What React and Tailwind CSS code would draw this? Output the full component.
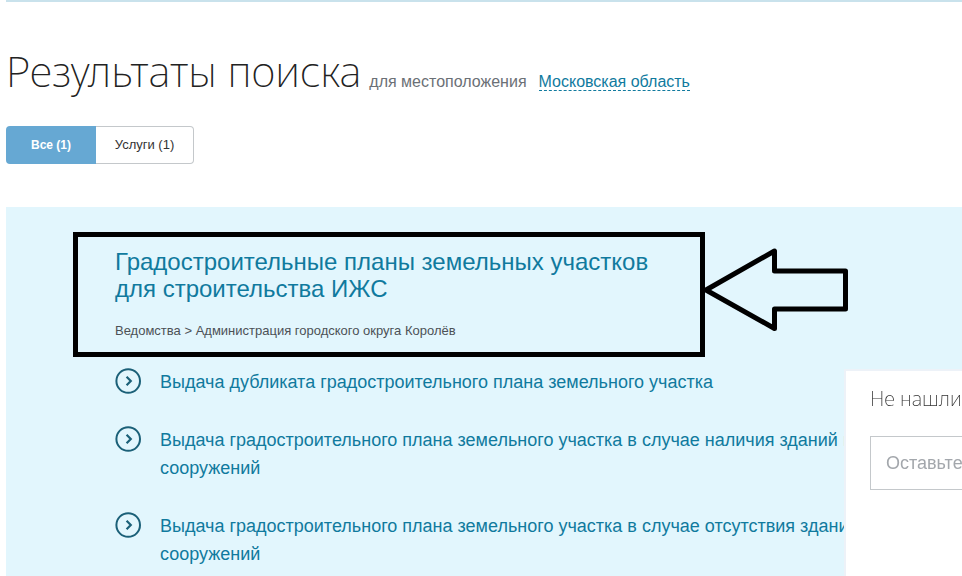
import React from 'react';

const tabs = [
    { id: 'all', label: 'Все (1)', active: true },
    { id: 'services', label: 'Услуги (1)', active: false },
];

const services = [
    'Выдача дубликата градостроительного плана земельного участка',
    'Выдача градостроительного плана земельного участка в случае наличия зданий и сооружений',
    'Выдача градостроительного плана земельного участка в случае отсутствия зданий и сооружений',
];

const CircleChevron = () => (
    <svg className="w-7 h-7 shrink-0" viewBox="0 0 28 28" fill="none" stroke="#1b6078" strokeWidth="2" aria-hidden="true">
        <circle cx="14.2" cy="13" r="11.8" />
        <path d="M12.6 8.7L16.8 13L12.6 17.3" strokeWidth="2.2" />
    </svg>
);

const Tabs = () => (
    <div className="flex mt-7">
        {tabs.map(tab => (
            <button
                key={tab.id}
                type="button"
                className={
                    tab.active
                        ? 'w-[90px] h-[38px] text-xs font-bold text-white bg-[#66a8d3] rounded-l'
                        : 'w-[98px] h-[38px] text-[13px] text-[#333333] bg-white border border-l-0 border-[#c4c8cb] rounded-r-sm'
                }
            >
                {tab.label}
            </button>
        ))}
    </div>
);

const ResultCard = () => (
    <div className="relative w-[632px] border-5 border-black pl-[37px] pr-10 pt-[11px] pb-[14px]">
        <h2 className="text-2xl leading-[27px] text-[#107a9e]">
            <a href="#result">Градостроительные планы земельных участков для строительства ИЖС</a>
        </h2>
        <p className="mt-[22px] text-[13px] leading-[14px] text-[#4c5156]">
            Ведомства &gt; Администрация городского округа Королёв
        </p>
        <svg
            className="absolute left-full top-2 w-[150px] h-[90px]"
            viewBox="0 0 150 90"
            fill="none"
            stroke="black"
            strokeWidth="5"
            aria-hidden="true"
        >
            <path d="M6 45L74.5 6V26H145.5V64H74.5V83.5Z" strokeLinejoin="round" />
        </svg>
    </div>
);

const FeedbackPopup = () => (
    <aside className="fixed -right-64 bottom-0 w-[372px] h-[205px] pl-6 pr-6 pt-3 bg-white shadow-[0_0_0_2px_#edf2f8]">
        <label htmlFor="feedback" className="block text-xl leading-8 font-extralight text-[#333333] font-['Noto_Sans',sans-serif]">
            Не нашли что искали?
        </label>
        <input
            id="feedback"
            type="text"
            placeholder="Оставьте отзыв"
            className="mt-[21px] w-full h-[54px] px-[15px] text-lg border border-[#c4c8cb] bg-white placeholder:text-[#a3a7ac]"
        />
    </aside>
);

const App = () => (
    <div className="flex min-h-screen bg-white font-['Liberation_Sans',Arial,sans-serif]">
        <main className="flex flex-1 flex-col ml-[6px] border-t-2 border-[#c9e2ec]">
            <header className="flex items-baseline pt-[42px]">
                <h1 className="text-[42px] leading-[54px] font-extralight text-[#222222] font-['Noto_Sans',sans-serif]">
                    Результаты поиска
                </h1>
                <span className="ml-2 text-base text-[#6b7076]">для местоположения</span>
                <a href="#region" className="ml-3 text-base leading-4 text-[#107a9e] border-b border-dashed border-[#107a9e]">
                    Московская область
                </a>
            </header>
            <Tabs />
            <section className="flex-1 mt-[43px] bg-[#e2f6fd] pl-[67px] pr-20 pt-[25px] pb-1">
                <ResultCard />
                <ul className="mt-[11px] pl-[41px] space-y-[30px]">
                    {services.map(service => (
                        <li key={service} className="flex items-start">
                            <CircleChevron />
                            <a href="#service" className="ml-[18px] text-lg leading-7 text-[#107a9e]">
                                {service}
                            </a>
                        </li>
                    ))}
                </ul>
            </section>
        </main>
        <FeedbackPopup />
    </div>
);

export default App;
